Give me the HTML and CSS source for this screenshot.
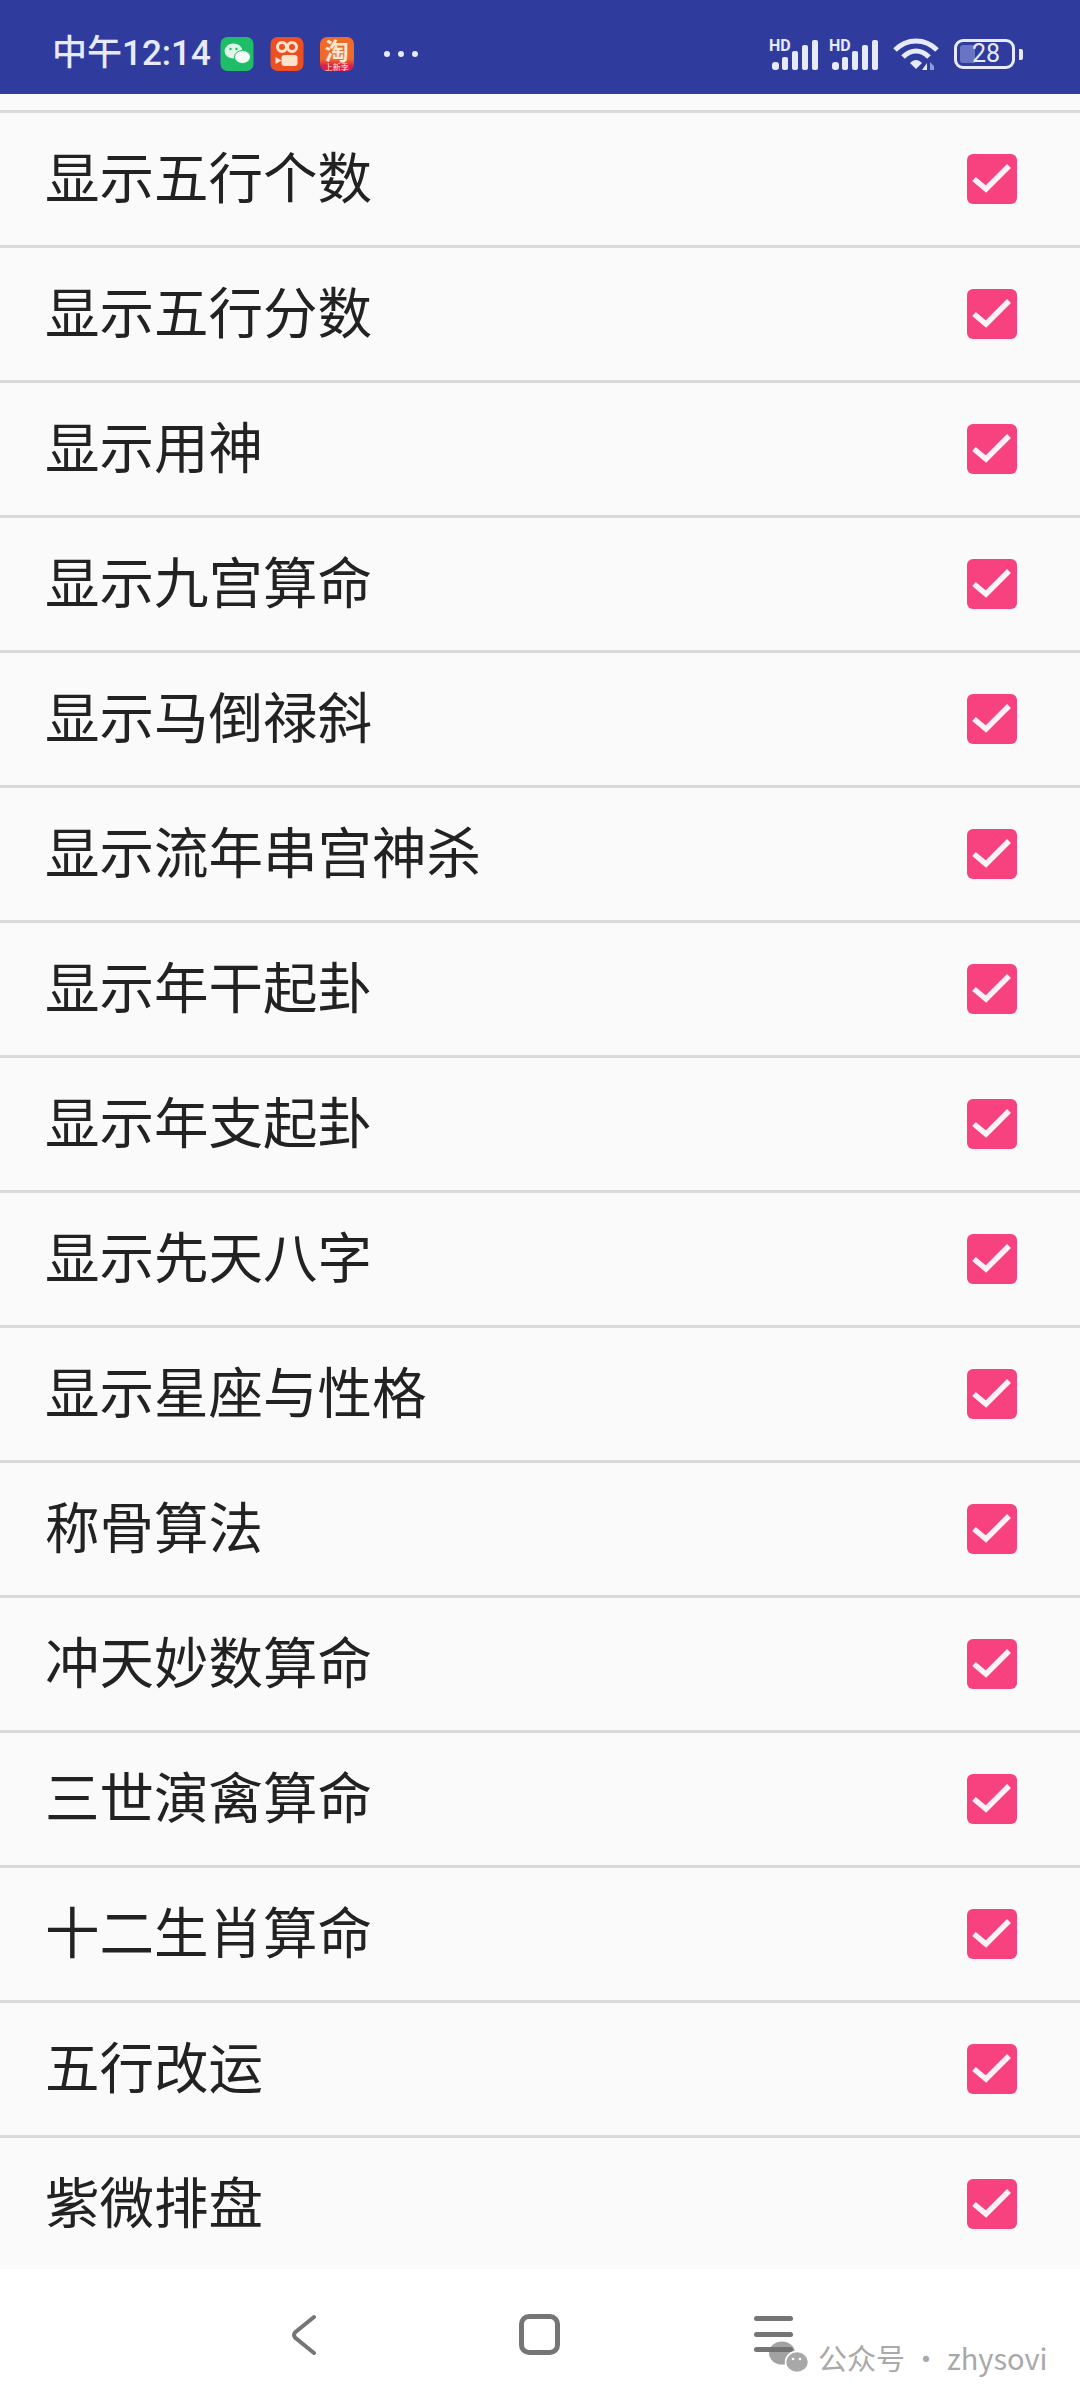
FILE: index.html
```html
<!DOCTYPE html>
<html lang="zh-CN">
<head>
  <meta charset="UTF-8" />
  <title>设置</title>
  <link rel="stylesheet" href="styles.css">
</head>
<body>
  <svg class="defs" width="0" height="0">
    <symbol id="check" viewBox="0 0 50 50">
      <rect width="50" height="50" rx="6" fill="#f8417f" />
      <path d="M7 25 L19 35 L42 12" fill="none" stroke="#fdf3f7" stroke-width="5.5" />
    </symbol>
    <symbol id="signal" viewBox="0 0 50 34">
      <rect x="3" y="25" width="7" height="8" rx="3" />
      <rect x="13" y="20" width="6" height="13" rx="2" />
      <rect x="23" y="14" width="6" height="19" rx="2" />
      <rect x="33" y="8" width="6" height="25" rx="2" />
      <rect x="43" y="3" width="6" height="30" rx="2" />
    </symbol>
  </svg>

  <header class="status">
    <div class="status-left">
      <span class="time">中午12:14</span>
      <svg class="app" viewBox="0 0 33 34">
        <rect width="33" height="34" rx="7" fill="#1fbd68" />
        <ellipse cx="13" cy="14" rx="9" ry="7.500" fill="#dff5e8" />
        <ellipse cx="22" cy="20" rx="8" ry="6.500" fill="#f4fbf6" stroke="#1fbd68" />
        <circle cx="10" cy="12" r="1.200" fill="#1fbd68" />
        <circle cx="16" cy="12" r="1.200" fill="#1fbd68" />
      </svg>
      <svg class="app" viewBox="0 0 33 34">
        <rect width="33" height="34" rx="7" fill="#ec5022" />
        <circle cx="11.500" cy="10" r="4.500" fill="none" stroke="#fde3cc" stroke-width="3" />
        <circle cx="21.500" cy="10" r="4.500" fill="none" stroke="#fde3cc" stroke-width="3" />
        <rect x="11" y="18" width="16" height="11" rx="3" fill="#fde3cc" />
        <path d="M5 20 L11 23.500 L5 27 Z" fill="#fde3cc" />
      </svg>
      <div class="app taobao">
        <span class="tao">淘</span>
        <span class="tao-sub">上新季</span>
      </div>
      <div class="dots"><i></i><i></i><i></i></div>
    </div>
    <div class="status-right">
      <div class="net"><b>HD</b><svg class="bars"><use href="#signal" /></svg></div>
      <div class="net"><b>HD</b><svg class="bars"><use href="#signal" /></svg></div>
      <svg class="wifi" viewBox="0 0 48 34">
        <path d="M3 13 C15 1 33 1 45 13" fill="none" stroke="#e6eafb" stroke-width="5" />
        <path d="M11 20 C19 12 29 12 37 20" fill="none" stroke="#e6eafb" stroke-width="5" />
        <path d="M18 26 C22 22 26 22 30 26 L24 32 Z" fill="#e6eafb" />
        <path d="M35 26 L35 33 L30 33 Z" fill="#e6eafb" />
        <path d="M38 25 L42 29 L42 33 L38 33 Z" fill="#8f9ad6" />
      </svg>
      <div class="battery">
        <div class="battery-body">
          <div class="battery-fill"></div>
          <span class="battery-num">28</span>
        </div>
        <div class="battery-nub"></div>
      </div>
    </div>
  </header>

  <main class="list">
    <div class="row"><span>显示五行个数</span><svg class="box"><use href="#check" /></svg></div>
    <div class="row"><span>显示五行分数</span><svg class="box"><use href="#check" /></svg></div>
    <div class="row"><span>显示用神</span><svg class="box"><use href="#check" /></svg></div>
    <div class="row"><span>显示九宫算命</span><svg class="box"><use href="#check" /></svg></div>
    <div class="row"><span>显示马倒禄斜</span><svg class="box"><use href="#check" /></svg></div>
    <div class="row"><span>显示流年串宫神杀</span><svg class="box"><use href="#check" /></svg></div>
    <div class="row"><span>显示年干起卦</span><svg class="box"><use href="#check" /></svg></div>
    <div class="row"><span>显示年支起卦</span><svg class="box"><use href="#check" /></svg></div>
    <div class="row"><span>显示先天八字</span><svg class="box"><use href="#check" /></svg></div>
    <div class="row"><span>显示星座与性格</span><svg class="box"><use href="#check" /></svg></div>
    <div class="row"><span>称骨算法</span><svg class="box"><use href="#check" /></svg></div>
    <div class="row"><span>冲天妙数算命</span><svg class="box"><use href="#check" /></svg></div>
    <div class="row"><span>三世演禽算命</span><svg class="box"><use href="#check" /></svg></div>
    <div class="row"><span>十二生肖算命</span><svg class="box"><use href="#check" /></svg></div>
    <div class="row"><span>五行改运</span><svg class="box"><use href="#check" /></svg></div>
    <div class="row last"><span>紫微排盘</span><svg class="box"><use href="#check" /></svg></div>
  </main>

  <footer class="navbar">
    <svg class="nav-back" viewBox="0 0 26 42">
      <path d="M23 3 L4 18.500 Q2 21 4 23.500 L23 39" fill="none" stroke="#757575" stroke-width="4" stroke-linecap="round" />
    </svg>
    <div class="nav-home"></div>
    <div class="nav-menu"><i></i><i></i><i></i></div>
    <div class="watermark">
      <svg class="wm-icon" viewBox="0 0 40 32">
        <ellipse cx="13" cy="12" rx="13" ry="11.500" fill="#707070" fill-opacity="0.65" />
        <ellipse cx="28" cy="21" rx="11.500" ry="10.500" fill="#a8a8a8" stroke="#fff" stroke-width="1.500" />
        <circle cx="24" cy="18" r="1.300" fill="#fff" />
        <circle cx="31" cy="18" r="1.300" fill="#fff" />
      </svg>
      <span>公众号 · zhysovi</span>
    </div>
  </footer>
</body>
</html>
```

FILE: styles.css
```css
* {
  box-sizing: border-box;
  margin: 0;
  padding: 0;
}

body {
  width: 1080px;
  height: 2400px;
  overflow: hidden;
  background: #fff;
  color: #222;
  font-family: "Noto Sans CJK SC", "Noto Sans", sans-serif;
  display: flex;
  flex-direction: column;
}

.defs {
  position: absolute;
}

/* status bar */
.status {
  height: 94px;
  flex: none;
  background: #2f3c9e;
  color: #e6eafb;
  display: flex;
  justify-content: space-between;
  align-items: center;
  padding: 20px 57px 6px 52px;
}

.status-left,
.status-right {
  display: flex;
  align-items: center;
}

.time {
  font-family: "Roboto", "Noto Sans CJK SC", sans-serif;
  font-size: 35px;
  font-weight: 500;
  line-height: 44px;
  margin-right: 9px;
  white-space: nowrap;
}

.app {
  width: 34px;
  height: 34px;
  margin-right: 16px;
  flex: none;
}

.taobao {
  border-radius: 7px;
  background: linear-gradient(#ef6b2c 65%, #d91f4a 85%);
  text-align: center;
  color: #fde8d0;
}

.tao {
  display: block;
  font-size: 24px;
  line-height: 25px;
  font-weight: 700;
}

.tao-sub {
  display: block;
  font-size: 8px;
  line-height: 9px;
  white-space: nowrap;
}

.dots {
  display: flex;
  gap: 7.500px;
  margin-left: 14px;
}

.dots i {
  width: 6.500px;
  height: 6.500px;
  border-radius: 50%;
  background: #e6eafb;
}

.net {
  position: relative;
  width: 50px;
  height: 34px;
  margin-right: 10px;
}

.net b {
  position: absolute;
  left: 0;
  top: 1px;
  font-family: "Roboto", sans-serif;
  font-size: 16px;
  line-height: 15px;
}

.bars {
  display: block;
  width: 50px;
  height: 34px;
  fill: #e6eafb;
}

.wifi {
  width: 48px;
  height: 34px;
  margin: 0 14px 0 3px;
}

.battery {
  display: flex;
  align-items: center;
  gap: 4px;
}

.battery-body {
  position: relative;
  width: 61px;
  height: 30px;
  border: 3px solid #e6eafb;
  border-radius: 9px;
  padding: 3px;
}

.battery-fill {
  width: 15px;
  height: 100%;
  background: #6a74c4;
  border-radius: 3px 0 0 3px;
}

.battery-num {
  position: absolute;
  left: 15px;
  top: -3px;
  font-family: "Roboto", sans-serif;
  font-size: 25px;
  line-height: 30px;
}

.battery-nub {
  width: 4px;
  height: 11px;
  background: #e6eafb;
  border-radius: 0 2px 2px 0;
}

/* list */
.list {
  height: 2175px;
  flex: none;
  background: #fafafa;
  padding-top: 16px;
  overflow: hidden;
}

.list::before {
  content: "";
  display: block;
  height: 3px;
  background: #d9d9d9;
}

.row {
  height: 135px;
  display: flex;
  justify-content: space-between;
  align-items: center;
  padding: 0 63px 0 45px;
  border-bottom: 3px solid #d9d9d9;
  font-size: 54.500px;
  line-height: 1;
}

.row span {
  margin-bottom: 8px;
}

.row.last {
  border-bottom-color: transparent;
}

.box {
  width: 50px;
  height: 50px;
  flex: none;
}

/* bottom nav */
.navbar {
  flex: 1;
  position: relative;
  background: #fff;
}

.nav-back {
  position: absolute;
  left: 291px;
  top: 45px;
  width: 26px;
  height: 42px;
}

.nav-home {
  position: absolute;
  left: 519px;
  top: 45px;
  width: 41px;
  height: 41px;
  border: 5px solid #757575;
  border-radius: 10px;
}

.nav-menu {
  position: absolute;
  left: 754px;
  top: 47px;
  width: 39px;
  display: flex;
  flex-direction: column;
  gap: 10.500px;
}

.nav-menu i {
  height: 5px;
  border-radius: 3px;
  background: #757575;
}

.watermark {
  position: absolute;
  left: 769px;
  top: 71px;
  display: flex;
  align-items: center;
  gap: 9px;
  color: #a9a9a9;
  font-size: 29px;
  line-height: 34px;
  white-space: nowrap;
}

.wm-icon {
  width: 40px;
  height: 32px;
}
```
